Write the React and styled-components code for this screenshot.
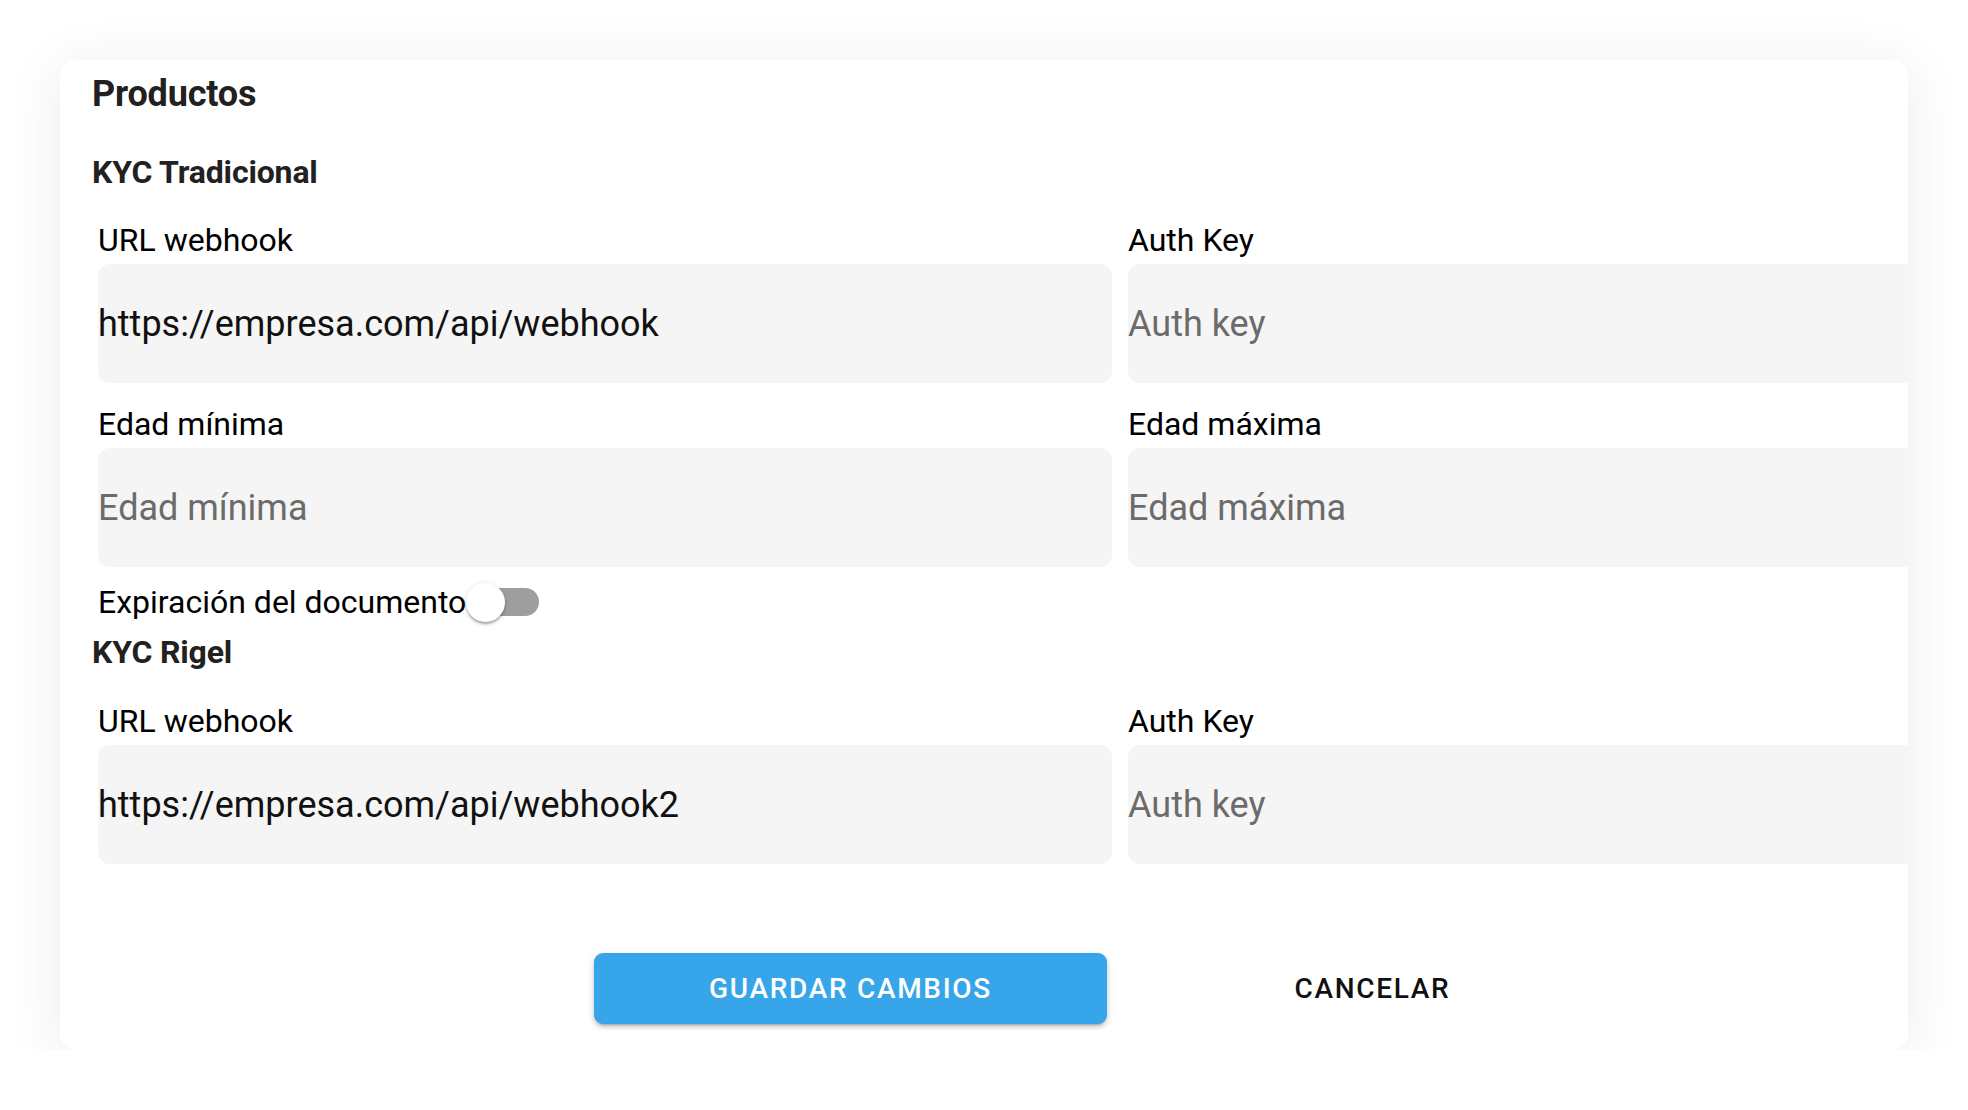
import React from "react";
import styled, { createGlobalStyle } from "styled-components";

const Global = createGlobalStyle`
  html, body { margin: 0; padding: 0; background: #ffffff; }
  body { font-family: Roboto, "Noto Sans", "Liberation Sans", sans-serif; }
  * { box-sizing: border-box; }
`;

const Page = styled.div`
  padding: 60px 60px 0 60px;
`;

const Card = styled.section`
  background: #ffffff;
  border-radius: 16px;
  box-shadow: 0 6px 56px rgba(30, 40, 70, 0.09);
  padding: 13px 0 26px 32px;
  overflow: hidden;
`;

const Title = styled.h2`
  margin: 0;
  font-size: 36px;
  line-height: 42px;
  font-weight: 700;
  color: #212121;
  letter-spacing: -0.005em;
`;

const SectionTitle = styled.h3`
  margin: ${(p) => p.$top}px 0 0 0;
  font-size: 32px;
  line-height: 36px;
  font-weight: 700;
  color: #212121;
  letter-spacing: -0.005em;
`;

const FieldGrid = styled.div`
  display: grid;
  grid-template-columns: 1014px 1014px;
  column-gap: 16px;
  row-gap: 22px;
  margin: ${(p) => p.$top}px 0 0 6px;
`;

const Field = styled.label`
  display: flex;
  flex-direction: column;
  gap: 5px;
`;

const Label = styled.span`
  font-size: 32px;
  line-height: 38px;
  color: #000000;
`;

const Input = styled.input`
  height: 119px;
  width: 100%;
  border: none;
  outline: none;
  padding: 0;
  margin: 0;
  border-radius: 12px;
  background: #f5f5f5;
  font-family: inherit;
  font-size: 36px;
  color: #111111;
  &::placeholder {
    color: #6b6b6b;
    opacity: 1;
  }
`;

const ToggleRow = styled.div`
  display: flex;
  align-items: center;
  height: 38px;
  margin: 16px 0 0 6px;
`;

const ToggleLabel = styled.span`
  font-size: 32px;
  line-height: 38px;
  color: #000000;
`;

const SwitchRoot = styled.span`
  position: relative;
  display: inline-block;
  width: 74px;
  height: 40px;
  margin-left: 0;
`;

const Track = styled.span`
  position: absolute;
  left: 5px;
  top: 6px;
  width: 68px;
  height: 28px;
  border-radius: 14px;
  background: #9e9e9e;
`;

const Thumb = styled.span`
  position: absolute;
  left: 0;
  top: 0.5px;
  width: 39px;
  height: 39px;
  border-radius: 50%;
  background: #ffffff;
  box-shadow: 0 3px 3px -1px rgba(0, 0, 0, 0.2), 0 2px 2px rgba(0, 0, 0, 0.14),
    0 1px 6px rgba(0, 0, 0, 0.12);
`;

const ButtonRow = styled.div`
  display: grid;
  grid-template-columns: 513px 513px;
  column-gap: 9px;
  margin-top: 89px;
  padding-left: 502px;
`;

const Button = styled.button`
  height: 71px;
  border: none;
  border-radius: 9px;
  font-family: inherit;
  font-size: 28px;
  font-weight: 500;
  letter-spacing: 0.06em;
  text-transform: uppercase;
  cursor: pointer;
  background: ${(p) => (p.$primary ? "#36a5ea" : "transparent")};
  color: ${(p) => (p.$primary ? "#ffffff" : "#111111")};
  box-shadow: ${(p) =>
    p.$primary
      ? "0 4px 2px -3px rgba(0,0,0,0.2), 0 3px 4px rgba(0,0,0,0.14), 0 2px 8px rgba(0,0,0,0.12)"
      : "none"};
`;

function FieldItem({ label, value, placeholder }) {
  return (
    <Field>
      <Label>{label}</Label>
      <Input defaultValue={value} placeholder={placeholder} />
    </Field>
  );
}

export default function App() {
  return (
    <>
      <Global />
      <Page>
        <Card>
          <Title>Productos</Title>
          <SectionTitle $top={39}>KYC Tradicional</SectionTitle>
          <FieldGrid $top={31}>
            <FieldItem label="URL webhook" value="https://empresa.com/api/webhook" />
            <FieldItem label="Auth Key" placeholder="Auth key" />
            <FieldItem label="Edad mínima" placeholder="Edad mínima" />
            <FieldItem label="Edad máxima" placeholder="Edad máxima" />
          </FieldGrid>
          <ToggleRow>
            <ToggleLabel>Expiración del documento</ToggleLabel>
            <SwitchRoot role="switch" aria-checked="false">
              <Track />
              <Thumb />
            </SwitchRoot>
          </ToggleRow>
          <SectionTitle $top={13}>KYC Rigel</SectionTitle>
          <FieldGrid $top={32}>
            <FieldItem label="URL webhook" value="https://empresa.com/api/webhook2" />
            <FieldItem label="Auth Key" placeholder="Auth key" />
          </FieldGrid>
          <ButtonRow>
            <Button $primary>Guardar cambios</Button>
            <Button>Cancelar</Button>
          </ButtonRow>
        </Card>
      </Page>
    </>
  );
}
